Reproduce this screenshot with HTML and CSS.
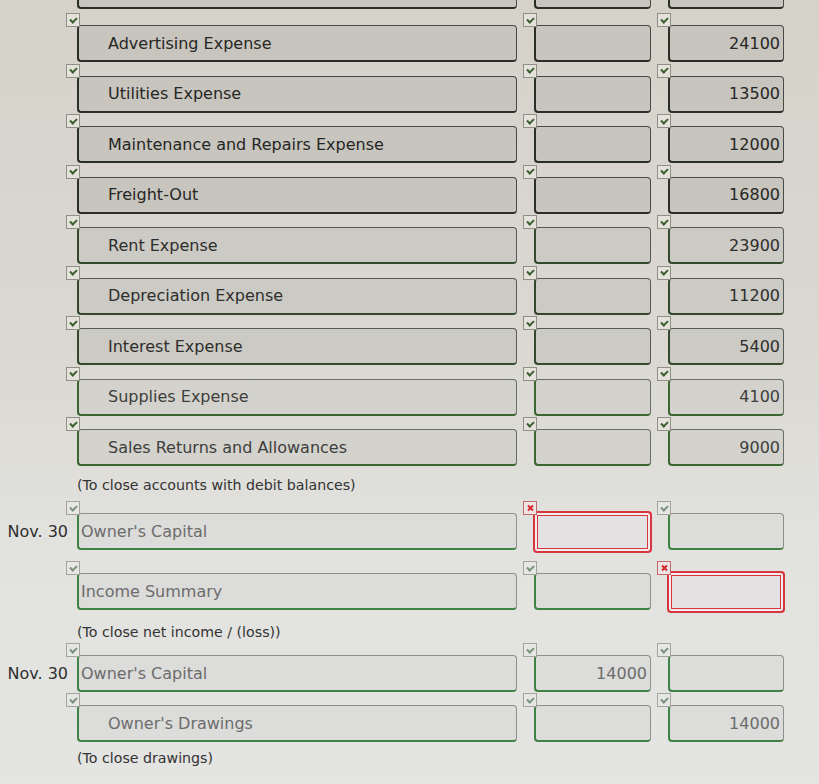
FILE: index.html
```html
<!DOCTYPE html>
<html>
<head>
<meta charset="utf-8">
<link rel="stylesheet" href="styles.css">
</head>
<body>
<div class="journal">

  <div class="row partial dark">
    <div class="date"></div>
    <div class="cell"><div class="box"></div></div>
    <div class="cell"><div class="box"></div></div>
    <div class="cell"><div class="box"></div></div>
  </div>

  <div class="row dark">
    <div class="date"></div>
    <div class="cell"><span class="cb ok"></span><div class="box acct indent">Advertising Expense</div></div>
    <div class="cell"><span class="cb ok"></span><div class="box amt"></div></div>
    <div class="cell"><span class="cb ok"></span><div class="box amt">24100</div></div>
  </div>

  <div class="row dark">
    <div class="date"></div>
    <div class="cell"><span class="cb ok"></span><div class="box acct indent">Utilities Expense</div></div>
    <div class="cell"><span class="cb ok"></span><div class="box amt"></div></div>
    <div class="cell"><span class="cb ok"></span><div class="box amt">13500</div></div>
  </div>

  <div class="row dark">
    <div class="date"></div>
    <div class="cell"><span class="cb ok"></span><div class="box acct indent">Maintenance and Repairs Expense</div></div>
    <div class="cell"><span class="cb ok"></span><div class="box amt"></div></div>
    <div class="cell"><span class="cb ok"></span><div class="box amt">12000</div></div>
  </div>

  <div class="row dark">
    <div class="date"></div>
    <div class="cell"><span class="cb ok"></span><div class="box acct indent">Freight-Out</div></div>
    <div class="cell"><span class="cb ok"></span><div class="box amt"></div></div>
    <div class="cell"><span class="cb ok"></span><div class="box amt">16800</div></div>
  </div>

  <div class="row mid">
    <div class="date"></div>
    <div class="cell"><span class="cb ok"></span><div class="box acct indent">Rent Expense</div></div>
    <div class="cell"><span class="cb ok"></span><div class="box amt"></div></div>
    <div class="cell"><span class="cb ok"></span><div class="box amt">23900</div></div>
  </div>

  <div class="row mid">
    <div class="date"></div>
    <div class="cell"><span class="cb ok"></span><div class="box acct indent">Depreciation Expense</div></div>
    <div class="cell"><span class="cb ok"></span><div class="box amt"></div></div>
    <div class="cell"><span class="cb ok"></span><div class="box amt">11200</div></div>
  </div>

  <div class="row mid">
    <div class="date"></div>
    <div class="cell"><span class="cb ok"></span><div class="box acct indent">Interest Expense</div></div>
    <div class="cell"><span class="cb ok"></span><div class="box amt"></div></div>
    <div class="cell"><span class="cb ok"></span><div class="box amt">5400</div></div>
  </div>

  <div class="row light">
    <div class="date"></div>
    <div class="cell"><span class="cb ok"></span><div class="box acct indent">Supplies Expense</div></div>
    <div class="cell"><span class="cb ok"></span><div class="box amt"></div></div>
    <div class="cell"><span class="cb ok"></span><div class="box amt">4100</div></div>
  </div>

  <div class="row light last">
    <div class="date"></div>
    <div class="cell"><span class="cb ok"></span><div class="box acct indent">Sales Returns and Allowances</div></div>
    <div class="cell"><span class="cb ok"></span><div class="box amt"></div></div>
    <div class="cell"><span class="cb ok"></span><div class="box amt">9000</div></div>
  </div>

  <div class="note n1">(To close accounts with debit balances)</div>

  <div class="row green r-oc1">
    <div class="date">Nov. 30</div>
    <div class="cell"><span class="cb ok"></span><div class="box acct">Owner's Capital</div></div>
    <div class="cell"><span class="cb bad"></span><div class="box amt err"></div></div>
    <div class="cell"><span class="cb ok"></span><div class="box amt"></div></div>
  </div>

  <div class="row green r-is">
    <div class="date"></div>
    <div class="cell"><span class="cb ok"></span><div class="box acct">Income Summary</div></div>
    <div class="cell"><span class="cb ok"></span><div class="box amt"></div></div>
    <div class="cell"><span class="cb bad"></span><div class="box amt err"></div></div>
  </div>

  <div class="note n2">(To close net income / (loss))</div>

  <div class="row green r-oc2">
    <div class="date">Nov. 30</div>
    <div class="cell"><span class="cb ok"></span><div class="box acct">Owner's Capital</div></div>
    <div class="cell"><span class="cb ok"></span><div class="box amt">14000</div></div>
    <div class="cell"><span class="cb ok"></span><div class="box amt"></div></div>
  </div>

  <div class="row green r-dr">
    <div class="date"></div>
    <div class="cell"><span class="cb ok"></span><div class="box acct indent">Owner's Drawings</div></div>
    <div class="cell"><span class="cb ok"></span><div class="box amt"></div></div>
    <div class="cell"><span class="cb ok"></span><div class="box amt">14000</div></div>
  </div>

  <div class="note n3">(To close drawings)</div>

</div>
</body>
</html>
```

FILE: styles.css
```css
html, body {
  margin: 0;
  padding: 0;
}

body {
  width: 819px;
  height: 784px;
  overflow: hidden;
  font-family: "DejaVu Sans", Verdana, sans-serif;
  font-size: 16px;
  background: linear-gradient(180deg, #d5d2ca 0%, #dad8d1 45%, #e2e2df 70%, #e4e4e2 100%);
}

.journal {
  display: flex;
  flex-direction: column;
}

.row {
  display: grid;
  grid-template-columns: 60px 440px 117px 116px;
  column-gap: 17px;
  height: 37px;
  margin-bottom: 13.5px;
}

.row.partial {
  height: 9px;
  margin-bottom: 16px;
}

.row.last {
  margin-bottom: 9.5px;
}

.dark {
  --bt: #4a4a44;
  --bb: #2a2f26;
  --fill: #c7c5be;
  --txt: #262624;
}

.mid {
  --bt: #575a52;
  --bb: #33482c;
  --fill: #cccac4;
  --txt: #2e2e2c;
}

.light {
  --bt: #6a6d66;
  --bb: #3b6630;
  --fill: #d3d2cd;
  --txt: #3e3e3c;
}

.green {
  --bt: #8e908b;
  --bb: #3f8244;
  --fill: #dcdcda;
  --txt: #6c6c6c;
}

.date {
  display: flex;
  align-items: center;
  justify-content: flex-end;
  margin-right: -8px;
  color: #2f2f2f;
  white-space: nowrap;
}

.cell {
  position: relative;
}

.box {
  box-sizing: border-box;
  height: 100%;
  border: 1px solid var(--bt);
  border-left: 2px solid var(--bb);
  border-bottom: 2px solid var(--bb);
  border-radius: 4px;
  background: var(--fill);
  display: flex;
  align-items: center;
  color: var(--txt);
  white-space: nowrap;
  overflow: hidden;
}

.partial .box {
  border-top: none;
  border-radius: 0 0 4px 4px;
}

.acct {
  padding-left: 2px;
}

.acct.indent {
  padding-left: 29px;
}

.amt {
  justify-content: flex-end;
  padding-right: 3px;
}

.box.err {
  border: 2px solid #d8363f;
  box-shadow: inset 0 0 0 2px #f3ecec, inset 0 0 0 3px #d8363f;
  background: #e3e1e1;
  margin: -2px -1px -3px -1px;
  height: calc(100% + 5px);
}

.cb {
  position: absolute;
  left: -11px;
  top: -12px;
  width: 14px;
  height: 14px;
  box-sizing: border-box;
  border: 1px solid #8f8f87;
  background: #e4e2da;
  z-index: 2;
}

.cb.ok::after {
  content: "";
  position: absolute;
  left: 3px;
  top: 2.5px;
  width: 5px;
  height: 3px;
  border-left: 2px solid #3b5f30;
  border-bottom: 2px solid #3b5f30;
  transform: rotate(-45deg);
}

.green .cb {
  border-color: #a3a3a0;
  background: #e6e6e4;
}

.green .cb.ok::after {
  border-color: #7a927a;
}

.cb.bad {
  border-color: #c46a6a;
  background: #efe4e4;
}

.cb.bad::before,
.cb.bad::after {
  content: "";
  position: absolute;
  left: 2.5px;
  top: 5px;
  width: 7px;
  height: 2px;
  background: #d42a30;
  transform: rotate(45deg);
}

.cb.bad::after {
  transform: rotate(-45deg);
}

.note {
  padding-left: 77px;
  height: 19px;
  line-height: 19px;
  font-size: 14.2px;
  color: #333;
}

.n1 {
  margin-bottom: 18.5px;
}

.r-oc1 {
  margin-bottom: 23px;
}

.r-is {
  margin-bottom: 12.5px;
}

.n2 {
  margin-bottom: 13.5px;
}

.r-oc2 {
  margin-bottom: 13px;
}

.r-dr {
  margin-bottom: 6.5px;
}
```
